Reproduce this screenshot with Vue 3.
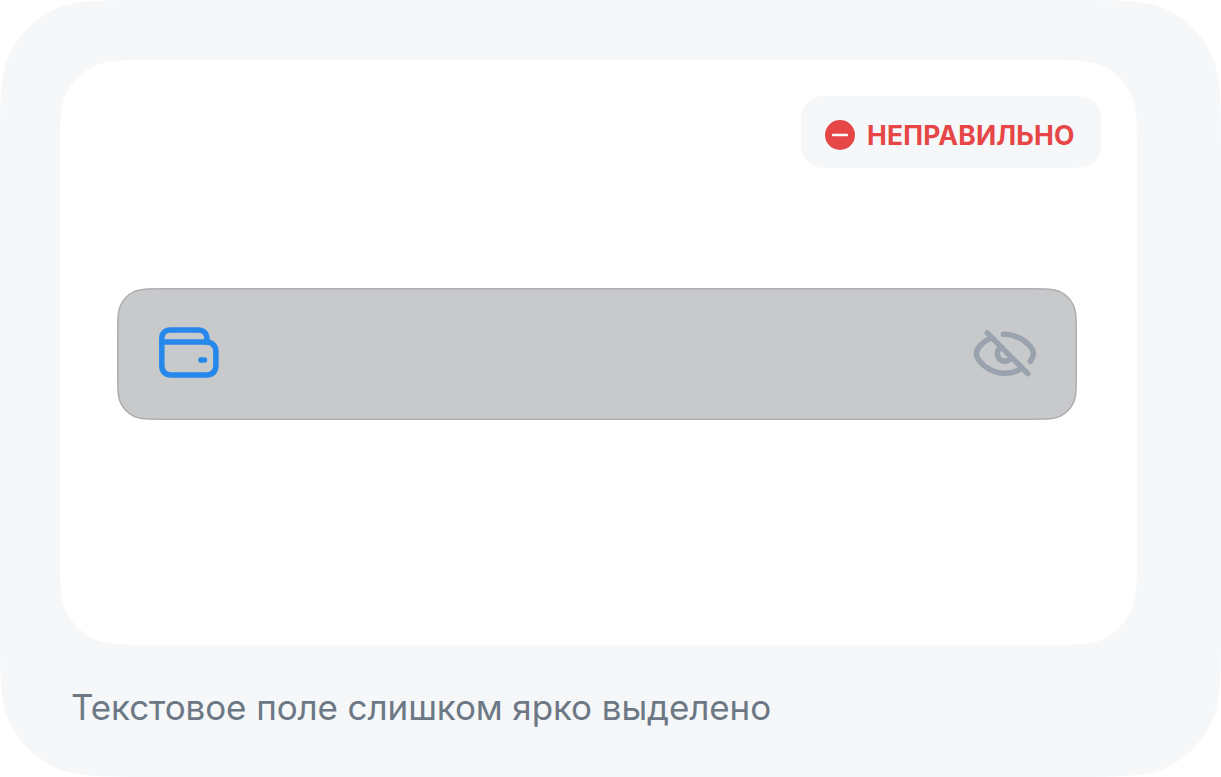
<script setup>
// Rounded rectangle with continuous (smoothed) corners.
function smoothRect(w, h, r, s, inset = 0) {
  const rad = (deg) => (deg * Math.PI) / 180
  const p = (1 + s) * r
  const arc = Math.sin(rad(45 * (1 - s))) * r * Math.SQRT2
  const c = r * Math.tan(rad(22.5 * s)) * Math.cos(rad(45 * s))
  const d = c * Math.tan(rad(45 * s))
  const b = (p - arc - c - d) / 3
  const a = 2 * b
  const x = inset
  const y = inset
  const R = w - inset
  const B = h - inset
  const l = a + b + c
  return [
    `M${R - p} ${y}`,
    `c${a} 0 ${a + b} 0 ${l} ${d} a${r} ${r} 0 0 1 ${arc} ${arc} c${d} ${c} ${d} ${b + c} ${d} ${l}`,
    `L${R} ${B - p}`,
    `c0 ${a} 0 ${a + b} ${-d} ${l} a${r} ${r} 0 0 1 ${-arc} ${arc} c${-c} ${d} ${-b - c} ${d} ${-l} ${d}`,
    `L${x + p} ${B}`,
    `c${-a} 0 ${-a - b} 0 ${-l} ${-d} a${r} ${r} 0 0 1 ${-arc} ${-arc} c${-d} ${-c} ${-d} ${-b - c} ${-d} ${-l}`,
    `L${x} ${y + p}`,
    `c0 ${-a} 0 ${-a - b} ${d} ${-l} a${r} ${r} 0 0 1 ${arc} ${-arc} c${c} ${-d} ${b + c} ${-d} ${l} ${-d}Z`,
  ].join(' ')
}

const outerPath = smoothRect(1221, 777, 96, 0.6)
const cardPath = smoothRect(1077, 585, 60, 0.6)
const fieldPath = smoothRect(960, 132, 29, 0.6, 0.75)
const badgePath = smoothRect(300, 72, 22, 0.5)
</script>

<template>
  <main class="example">
    <svg class="shape" viewBox="0 0 1221 777"><path :d="outerPath" fill="#f5f7f9" /></svg>
    <section class="card">
      <svg class="shape" viewBox="0 0 1077 585"><path :d="cardPath" fill="#fff" /></svg>
      <div class="badge">
        <svg class="shape" viewBox="0 0 300 72"><path :d="badgePath" fill="#f5f7f9" /></svg>
        <svg class="minus" viewBox="0 0 30 30">
          <circle cx="15" cy="15" r="15" fill="#e64646" />
          <path d="M8.2 15H21.8" stroke="#fff" stroke-width="2.6" stroke-linecap="round" />
        </svg>
        <span class="badge-text">НЕПРАВИЛЬНО</span>
      </div>
      <div class="field">
        <svg class="shape" viewBox="0 0 960 132">
          <path :d="fieldPath" fill="#c8c9cb" stroke="#adaeb0" stroke-width="1.5" />
        </svg>
        <svg class="wallet" viewBox="0 0 72 72" fill="none" stroke="#2688eb" stroke-width="5.5" stroke-linecap="round" stroke-linejoin="round">
          <path d="M8.8 25V21.5C8.8 16 12 12.9 17.5 12.9H45C50.5 12.9 53.9 16 53.9 21.5V25" />
          <path d="M8.8 25H53.5C59.2 25.4 62.9 28.5 62.9 34.5V48.5C62.9 54.5 59.5 57.9 53.5 57.9H18.2C12.2 57.9 8.8 54.5 8.8 48.5Z" />
          <path d="M47.9 42.9H51.5" />
        </svg>
        <svg class="eye" viewBox="0 0 72 72" fill="none" stroke="#99a2ad" stroke-width="5.5" stroke-linecap="round" stroke-linejoin="round">
          <path d="M18.2 15.9L58.8 56.6" />
          <path d="M34.4 17.3C50.5 16.6 64.4 29.5 64.4 36.6C64.4 39.2 63.2 42 61.4 44.3" />
          <path d="M21.4 21.2C12.8 25.2 7.4 32 7.4 36.6C7.4 43.8 20 56.3 35.8 56.3C41.8 56.3 47.7 54.7 52.8 51.3" />
          <path d="M31.3 30.7C26 34.8 28.3 44.2 35.9 44.2C38.6 44.2 40.9 42.8 42.1 40.8" />
        </svg>
      </div>
    </section>
    <p class="caption">Текстовое поле слишком ярко выделено</p>
  </main>
</template>

<style>
body {
  margin: 0;
  background: #fff;
}
</style>

<style scoped>
.example {
  position: relative;
  isolation: isolate;
  box-sizing: border-box;
  width: 1221px;
  height: 777px;
  padding: 60px;
  overflow: hidden;
  font-family: Inter, "Noto Sans", sans-serif;
}
.shape {
  position: absolute;
  inset: 0;
  z-index: -1;
  width: 100%;
  height: 100%;
}
.card {
  position: relative;
  isolation: isolate;
  box-sizing: border-box;
  display: flex;
  flex-direction: column;
  width: 1077px;
  height: 585px;
  padding: 36px 36px 0 57px;
}
.badge {
  position: relative;
  isolation: isolate;
  box-sizing: border-box;
  align-self: flex-end;
  display: flex;
  align-items: center;
  gap: 11px;
  width: 300px;
  height: 72px;
  padding: 5px 0 0 24px;
}
.minus {
  flex: none;
  width: 30px;
  height: 30px;
}
.badge-text {
  padding-left: 1px;
  color: #e64646;
  font-size: 26.5px;
  font-weight: 700;
  line-height: 32px;
  letter-spacing: 0.15px;
  white-space: nowrap;
}
.field {
  position: relative;
  isolation: isolate;
  box-sizing: border-box;
  display: flex;
  align-items: center;
  justify-content: space-between;
  width: 960px;
  height: 132px;
  margin-top: 120px;
  padding: 0 36px 2px;
}
.wallet,
.eye {
  width: 72px;
  height: 72px;
}
.caption {
  margin: 38px 0 0 11px;
  color: #6d7885;
  font-size: 35px;
  font-weight: 400;
  line-height: 48px;
  letter-spacing: -0.1px;
  white-space: nowrap;
}
</style>
